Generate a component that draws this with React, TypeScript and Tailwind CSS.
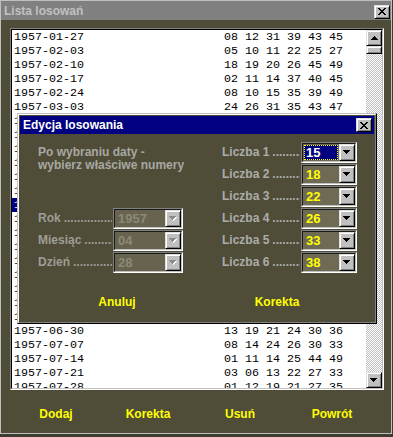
import React from "react";

const SANS = "font-['Liberation_Sans',Arial,sans-serif]";
const MONO = "font-['Liberation_Mono','Courier_New',monospace]";

const rows: [string, string][] = [
  ["1957-01-27", "08 12 31 39 43 45"],
  ["1957-02-03", "05 10 11 22 25 27"],
  ["1957-02-10", "18 19 20 26 45 49"],
  ["1957-02-17", "02 11 14 37 40 45"],
  ["1957-02-24", "08 10 15 35 39 49"],
  ["1957-03-03", "24 26 31 35 43 47"],
  ["1957-03-10", "03 09 17 28 33 41"],
  ["1957-03-17", "06 14 19 27 38 46"],
  ["1957-03-24", "01 12 22 29 34 48"],
  ["1957-03-31", "07 15 21 30 36 44"],
  ["1957-04-07", "04 11 23 32 39 42"],
  ["1957-04-14", "09 16 20 31 37 45"],
  ["1957-04-28", "15 18 22 26 33 38"],
  ["1957-05-05", "02 13 17 24 40 47"],
  ["1957-05-12", "05 08 19 28 35 43"],
  ["1957-05-19", "10 14 21 29 32 46"],
  ["1957-05-26", "03 07 18 25 36 49"],
  ["1957-06-02", "06 12 20 27 41 44"],
  ["1957-06-09", "01 09 16 23 34 48"],
  ["1957-06-16", "11 15 22 30 39 42"],
  ["1957-06-23", "04 17 26 31 37 45"],
  ["1957-06-30", "13 19 21 24 30 36"],
  ["1957-07-07", "08 14 24 26 30 33"],
  ["1957-07-14", "01 11 14 25 44 49"],
  ["1957-07-21", "03 06 13 22 27 33"],
  ["1957-07-28", "01 12 19 21 27 35"],
];

function XGlyph() {
  const px: [number, number][] = [
    [0, 0], [1, 0], [6, 0], [7, 0],
    [1, 1], [2, 1], [5, 1], [6, 1],
    [2, 2], [3, 2], [4, 2], [5, 2],
    [3, 3], [4, 3],
    [2, 4], [3, 4], [4, 4], [5, 4],
    [1, 5], [2, 5], [5, 5], [6, 5],
    [0, 6], [1, 6], [6, 6], [7, 6],
  ];
  return (
    <svg width="8" height="7" viewBox="0 0 8 7" shapeRendering="crispEdges">
      {px.map(([x, y], i) => (
        <rect key={i} x={x} y={y} width="1" height="1" fill="#000" />
      ))}
    </svg>
  );
}

function TriDown({ color = "#000", shadow }: { color?: string; shadow?: boolean }) {
  return (
    <svg width="8" height="5" viewBox="0 0 8 5" shapeRendering="crispEdges">
      {shadow && <path d="M1 1h7v1H1zM2 2h5v1H2zM3 3h3v1H3zM4 4h1v1H4z" fill="#fff" />}
      <path d="M0 0h7v1H0zM1 1h5v1H1zM2 2h3v1H2zM3 3h1v1H3z" fill={color} />
    </svg>
  );
}

function TriUp() {
  return (
    <svg width="7" height="4" viewBox="0 0 7 4" shapeRendering="crispEdges">
      <path d="M3 0h1v1H3zM2 1h3v1H2zM1 2h5v1H1zM0 3h7v1H0z" fill="#000" />
    </svg>
  );
}

function Raised({ className, children }: { className: string; children?: React.ReactNode }) {
  return (
    <div
      className={`${className} bg-[#c0c0c0] border border-t-[#dfdfdf] border-l-[#dfdfdf] border-r-black border-b-black shadow-[inset_1px_1px_0_#ffffff,inset_-1px_-1px_0_#808080] flex items-center justify-center`}
    >
      {children}
    </div>
  );
}

function Combo({ v, w, mode }: { v: string; w: string; mode: "sel" | "norm" | "dis" }) {
  return (
    <div className={`${w} h-[21px] flex border border-t-[#808080] border-l-[#808080] border-r-white border-b-white`}>
      <div className="flex-1 flex border border-t-[#1a1a1a] border-l-[#1a1a1a] border-r-[#c0c0c0] border-b-[#c0c0c0]">
        <div className={`flex-1 p-[1px] ${mode === "dis" ? "bg-[#67634e]" : "bg-[#6e6a53]"}`}>
          {mode === "sel" ? (
            <div className="h-full bg-[#000080] border border-dotted border-[#ffff00] flex items-center pl-[1px] text-white text-[13px] font-bold leading-none">
              {v}
            </div>
          ) : (
            <div
              className={`h-full flex items-center pl-[2px] text-[13px] font-bold leading-none ${
                mode === "dis" ? "text-[#8c8978]" : "text-[#ffff00]"
              }`}
            >
              {v}
            </div>
          )}
        </div>
        <Raised className="w-[16px] h-full">
          {mode === "dis" ? <TriDown color="#8a8a8a" shadow /> : <TriDown />}
        </Raised>
      </div>
    </div>
  );
}

function Field({ label, v, combo, mode, labelColor }: { label: string; v: string; combo: string; mode: "sel" | "norm" | "dis"; labelColor: string }) {
  return (
    <div className="h-[22px] flex items-start">
      <span className={`leading-[21px] text-[12px] font-bold whitespace-nowrap ${labelColor}`}>{label}</span>
      <span className={`flex-1 overflow-hidden whitespace-nowrap leading-[21px] text-[12px] font-bold ml-[3px] mr-[1px] ${labelColor}`}>
        ..........................................
      </span>
      <Combo v={v} w={combo} mode={mode} />
    </div>
  );
}

export default function App() {
  return (
    <div className={`relative w-[393px] h-[437px] bg-[#3e3c2c] overflow-hidden ${SANS}`}>
      <div className="w-[392px] h-[434px] bg-[#4f4c38] border border-[#c0c0c0] flex flex-col">
        <div className="h-[19px] bg-[#808080] flex items-center justify-between pl-[3px]">
          <span className="text-[12px] font-bold text-[#c0c0c0] leading-none">Lista losowań</span>
          <Raised className="w-[16px] h-[14px] mr-[1px] mt-[2px]">
            <XGlyph />
          </Raised>
        </div>
        <div className="pt-[8px] pl-[9px]">
          <div className="w-[374px] h-[362px] border border-t-[#808080] border-l-[#808080] border-r-white border-b-white">
            <div className="w-full h-full border border-t-black border-l-black border-r-[#c0c0c0] border-b-[#c0c0c0] bg-white flex">
              <div className={`flex-1 overflow-hidden ${MONO} text-[11.67px] leading-[14px] text-black`}>
                {rows.map(([d, n], i) => (
                  <div key={i} className={`flex h-[14px] pl-[2px] ${i === 12 ? "bg-[#000080] text-white" : ""}`}>
                    <span className="w-[210px] whitespace-pre">{d}</span>
                    <span className="whitespace-pre">{n}</span>
                  </div>
                ))}
              </div>
              <div className="w-[16px] flex flex-col">
                <Raised className="w-[16px] h-[16px]">
                  <TriUp />
                </Raised>
                <Raised className="w-[16px] h-[8px]" />
                <div className="flex-1 bg-[image:repeating-conic-gradient(#c0c0c0_0%_25%,#ffffff_0%_50%)] bg-[length:2px_2px]" />
                <Raised className="w-[16px] h-[16px]">
                  <TriDown />
                </Raised>
              </div>
            </div>
          </div>
          <div className="mt-[16px] flex text-[12px] font-bold text-[#ffff00] leading-[16px]">
            <div className="w-[92px] text-center">Dodaj</div>
            <div className="w-[92px] text-center">Korekta</div>
            <div className="w-[92px] text-center">Usuń</div>
            <div className="w-[92px] text-center">Powrót</div>
          </div>
        </div>
      </div>

      <div className="absolute left-[17px] top-[113px] w-[360px] h-[211px] border border-t-[#c0c0c0] border-l-[#c0c0c0] border-r-black border-b-black">
        <div className="w-full h-full border border-t-white border-l-white border-r-[#808080] border-b-[#808080] p-[1px] bg-[#4f4c38] flex flex-col">
          <div className="h-[18px] bg-[#000080] flex items-center justify-between pl-[3px]">
            <span className="text-[12px] font-bold text-white leading-none">Edycja losowania</span>
            <Raised className="w-[16px] h-[14px] mr-[2px]">
              <XGlyph />
            </Raised>
          </div>
          <div className="flex pt-[8px]">
            <div className="w-[145px] ml-[18px] flex flex-col">
              <div className="h-[66px] pt-[4px] text-[12px] font-bold leading-[12.5px] text-[#a8a8a2] whitespace-nowrap">
                Po wybraniu daty -
                <br />
                wybierz właściwe numery
              </div>
              <Field label="Rok" v="1957" combo="w-[70px]" mode="dis" labelColor="text-[#9e9d96]" />
              <Field label="Miesiąc" v="04" combo="w-[70px]" mode="dis" labelColor="text-[#9e9d96]" />
              <Field label="Dzień" v="28" combo="w-[70px]" mode="dis" labelColor="text-[#9e9d96]" />
            </div>
            <div className="w-[135px] ml-[39px] flex flex-col">
              <Field label="Liczba 1" v="15" combo="w-[56px]" mode="sel" labelColor="text-[#acaca8]" />
              <Field label="Liczba 2" v="18" combo="w-[56px]" mode="norm" labelColor="text-[#acaca8]" />
              <Field label="Liczba 3" v="22" combo="w-[56px]" mode="norm" labelColor="text-[#acaca8]" />
              <Field label="Liczba 4" v="26" combo="w-[56px]" mode="norm" labelColor="text-[#acaca8]" />
              <Field label="Liczba 5" v="33" combo="w-[56px]" mode="norm" labelColor="text-[#acaca8]" />
              <Field label="Liczba 6" v="38" combo="w-[56px]" mode="norm" labelColor="text-[#acaca8]" />
            </div>
          </div>
          <div className="mt-[20px] ml-[17px] flex text-[12px] font-bold text-[#ffff00] leading-[16px]">
            <div className="w-[160px] text-center">Anuluj</div>
            <div className="w-[160px] text-center">Korekta</div>
          </div>
        </div>
      </div>
    </div>
  );
}
